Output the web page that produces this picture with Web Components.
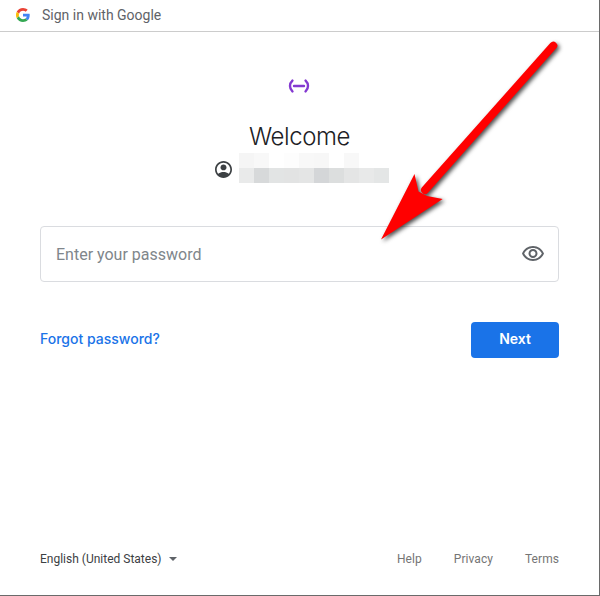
<!DOCTYPE html>
<html>
<head>
<meta charset="utf-8">
<style>
  html, body { margin: 0; padding: 0; background: #fff; }
  body { font-family: Roboto, "Liberation Sans", sans-serif; }
</style>
</head>
<body>
<signin-page>
  <signin-header slot="header">Sign in with Google</signin-header>
  <signin-welcome slot="welcome">Welcome</signin-welcome>
  <password-field slot="field" placeholder="Enter your password"></password-field>
  <signin-actions slot="actions" link="Forgot password?" button="Next"></signin-actions>
  <signin-footer slot="footer" lang-label="English (United States)">
    <span>Help</span><span>Privacy</span><span>Terms</span>
  </signin-footer>
  <red-arrow slot="overlay"></red-arrow>
</signin-page>

<script>
  class SigninPage extends HTMLElement {
    connectedCallback() {
      this.attachShadow({ mode: 'open' });
      this.shadowRoot.innerHTML = `
        <style>
          :host {
            display: flex;
            flex-direction: column;
            position: relative;
            box-sizing: border-box;
            width: 600px;
            height: 596px;
            border-right: 1px solid #6a6a6a;
            border-bottom: 1px solid #6a6a6a;
            overflow: hidden;
          }
          main {
            flex: 1;
            display: flex;
            flex-direction: column;
            padding: 0 40px 0 40px;
          }
          .footer { margin-top: auto; }
        </style>
        <slot name="header"></slot>
        <main>
          <slot name="welcome"></slot>
          <slot name="field"></slot>
          <slot name="actions"></slot>
          <div class="footer"><slot name="footer"></slot></div>
        </main>
        <slot name="overlay"></slot>
      `;
    }
  }
  customElements.define('signin-page', SigninPage);

  class SigninHeader extends HTMLElement {
    connectedCallback() {
      this.attachShadow({ mode: 'open' });
      this.shadowRoot.innerHTML = `
        <style>
          :host {
            display: flex;
            align-items: center;
            gap: 12px;
            box-sizing: border-box;
            height: 32px;
            padding: 0 0 2px 16px;
            border-bottom: 1px solid #cccccc;
            color: #5f6368;
            font: 400 14px Roboto, sans-serif;
          }
          svg { width: 14px; height: 14px; flex: none; }
        </style>
        <svg viewBox="0 0 48 48">
          <path fill="#EA4335" d="M24 9.5c3.54 0 6.71 1.22 9.21 3.6l6.85-6.85C35.9 2.38 30.47 0 24 0 14.62 0 6.51 5.38 2.56 13.22l7.98 6.19C12.43 13.72 17.74 9.5 24 9.5z"/>
          <path fill="#4285F4" d="M46.98 24.55c0-1.57-.15-3.09-.38-4.55H24v9.02h12.94c-.58 2.96-2.26 5.48-4.78 7.18l7.73 6c4.51-4.18 7.09-10.36 7.09-17.65z"/>
          <path fill="#FBBC05" d="M10.53 28.59c-.48-1.45-.76-2.99-.76-4.59s.27-3.14.76-4.59l-7.98-6.19C.92 16.46 0 20.12 0 24c0 3.88.92 7.54 2.56 10.78l7.97-6.19z"/>
          <path fill="#34A853" d="M24 48c6.48 0 11.93-2.13 15.89-5.81l-7.73-6c-2.15 1.45-4.92 2.3-8.16 2.3-6.26 0-11.57-4.22-13.47-9.91l-7.98 6.19C6.51 42.62 14.62 48 24 48z"/>
        </svg>
        <slot></slot>
      `;
    }
  }
  customElements.define('signin-header', SigninHeader);

  class SigninWelcome extends HTMLElement {
    connectedCallback() {
      // rows of the blurred-out address, left to right
      const top = ['#f5f5f5', '#f8f8f8', '#fff', '#fdfdfd', '#f8f8f8', '#f7f7f7', '#fff', '#f8f8f8', '#fff', '#fff'];
      const bottom = ['#e9eaea', '#d7d9da', '#e2e4e4', '#e2e3e3', '#e4e5e5', '#d4d6d8', '#dcdede', '#e4e5e5', '#e8e9e9', '#e4e6e6'];
      const cells = top.concat(bottom).map(c => `<i style="background:${c}"></i>`).join('');
      this.attachShadow({ mode: 'open' });
      this.shadowRoot.innerHTML = `
        <style>
          :host {
            display: flex;
            flex-direction: column;
            align-items: center;
            padding-top: 47px;
          }
          .logo { width: 22px; height: 14px; display: block; margin-left: -1px; }
          h1 {
            margin: 28px 0 0;
            height: 32px;
            font: 300 24px/32px Inter, sans-serif;
            letter-spacing: -0.45px;
            color: #202124;
          }
          .account {
            display: flex;
            align-items: flex-start;
            gap: 7px;
            margin: 0 0 0 4px;
          }
          .account svg { width: 17px; height: 17px; margin: 8px 0 0 0; display: block; }
          .blur {
            display: grid;
            grid-template-columns: repeat(10, 15px);
            grid-auto-rows: 15px;
          }
        </style>
        <svg class="logo" viewBox="0 0 22 14" fill="none" stroke="#8439d1" stroke-width="2.4" stroke-linecap="round">
          <path d="M4.4 1.6C1.2 4.6 1.2 9.4 4.4 12.4"/>
          <path d="M17.6 1.6C20.8 4.6 20.8 9.4 17.6 12.4"/>
          <path d="M6 7H16"/>
        </svg>
        <h1><slot></slot></h1>
        <div class="account">
          <svg viewBox="2 2 20 20">
            <path fill="#3c4043" d="M12 2C6.48 2 2 6.48 2 12s4.48 10 10 10 10-4.48 10-10S17.52 2 12 2zm6.14 15.12C16.45 15.8 14.32 15 12 15s-4.45.8-6.14 2.12C4.7 15.73 4 13.95 4 12c0-4.42 3.58-8 8-8s8 3.58 8 8c0 1.95-.7 3.73-1.86 5.12z"/>
            <path fill="#3c4043" d="M12 6c-1.93 0-3.5 1.57-3.5 3.5S10.07 13 12 13s3.5-1.57 3.5-3.5S13.93 6 12 6z"/>
          </svg>
          <div class="blur">${cells}</div>
        </div>
      `;
    }
  }
  customElements.define('signin-welcome', SigninWelcome);

  class PasswordField extends HTMLElement {
    connectedCallback() {
      this.attachShadow({ mode: 'open' });
      this.shadowRoot.innerHTML = `
        <style>
          :host {
            display: flex;
            align-items: center;
            justify-content: space-between;
            box-sizing: border-box;
            height: 56px;
            margin-top: 43px;
            padding: 0 13px 0 15px;
            border: 1px solid #dadce0;
            border-radius: 4px;
            color: #80868b;
            font: 400 16px Roboto, sans-serif;
          }
          svg { width: 24px; height: 24px; fill: #5f6368; display: block; }
        </style>
        <span>${this.getAttribute('placeholder')}</span>
        <svg viewBox="0 0 24 24">
          <path d="M12 6c3.79 0 7.17 2.13 8.82 5.5C19.17 14.87 15.79 17 12 17s-7.17-2.13-8.82-5.5C4.83 8.13 8.21 6 12 6m0-2C7 4 2.73 7.11 1 11.5 2.73 15.89 7 19 12 19s9.27-3.11 11-7.5C21.27 7.11 17 4 12 4zm0 5c1.38 0 2.5 1.12 2.5 2.5S13.38 14 12 14s-2.5-1.12-2.5-2.5S10.62 9 12 9m0-2c-2.48 0-4.5 2.02-4.5 4.5S9.52 16 12 16s4.5-2.02 4.5-4.5S14.48 7 12 7z"/>
        </svg>
      `;
    }
  }
  customElements.define('password-field', PasswordField);

  class SigninActions extends HTMLElement {
    connectedCallback() {
      this.attachShadow({ mode: 'open' });
      this.shadowRoot.innerHTML = `
        <style>
          :host {
            display: flex;
            align-items: center;
            justify-content: space-between;
            margin-top: 40px;
            font: 500 14px Inter, sans-serif;
          }
          a { color: #1a73e8; text-decoration: none; margin-bottom: 3px; }
          button {
            width: 88px;
            height: 36px;
            padding: 0 0 3px;
            border: 0;
            border-radius: 4px;
            background: #1a73e8;
            color: #fff;
            font: 600 14px Inter, sans-serif;
          }
        </style>
        <a href="#">${this.getAttribute('link')}</a>
        <button>${this.getAttribute('button')}</button>
      `;
    }
  }
  customElements.define('signin-actions', SigninActions);

  class SigninFooter extends HTMLElement {
    connectedCallback() {
      this.attachShadow({ mode: 'open' });
      this.shadowRoot.innerHTML = `
        <style>
          :host {
            display: flex;
            align-items: center;
            justify-content: space-between;
            height: 16px;
            margin: 0 0 28px 0;
            font: 400 12px Roboto, sans-serif;
          }
          .lang { display: flex; align-items: center; gap: 7px; color: #3c4043; }
          .caret {
            width: 0; height: 0;
            border: 4px solid transparent;
            border-top: 4px solid #5f6368;
            border-bottom: 0;
          }
          .links { display: flex; gap: 32px; color: #757575; letter-spacing: 0.06px; }
        </style>
        <div class="lang"><span>${this.getAttribute('lang-label')}</span><div class="caret"></div></div>
        <div class="links"><slot></slot></div>
      `;
    }
  }
  customElements.define('signin-footer', SigninFooter);

  // annotation drawn on top of the screenshot
  class RedArrow extends HTMLElement {
    connectedCallback() {
      this.attachShadow({ mode: 'open' });
      this.shadowRoot.innerHTML = `
        <style>
          :host { position: absolute; left: 0; top: 0; width: 600px; height: 596px; pointer-events: none; }
          svg { display: block; filter: drop-shadow(2px 2px 2px rgba(0,0,0,.7)); }
        </style>
        <svg width="600" height="596" viewBox="0 0 600 596">
          <path d="M553.3 45.7L425 190" stroke="#ff0000" stroke-width="8" stroke-linecap="round" fill="none"/>
          <path d="M381 239.5L414.5 174L418.5 191.5L427 196L442.7 199Z" fill="#ff0000"/>
        </svg>
      `;
    }
  }
  customElements.define('red-arrow', RedArrow);
</script>
</body>
</html>
